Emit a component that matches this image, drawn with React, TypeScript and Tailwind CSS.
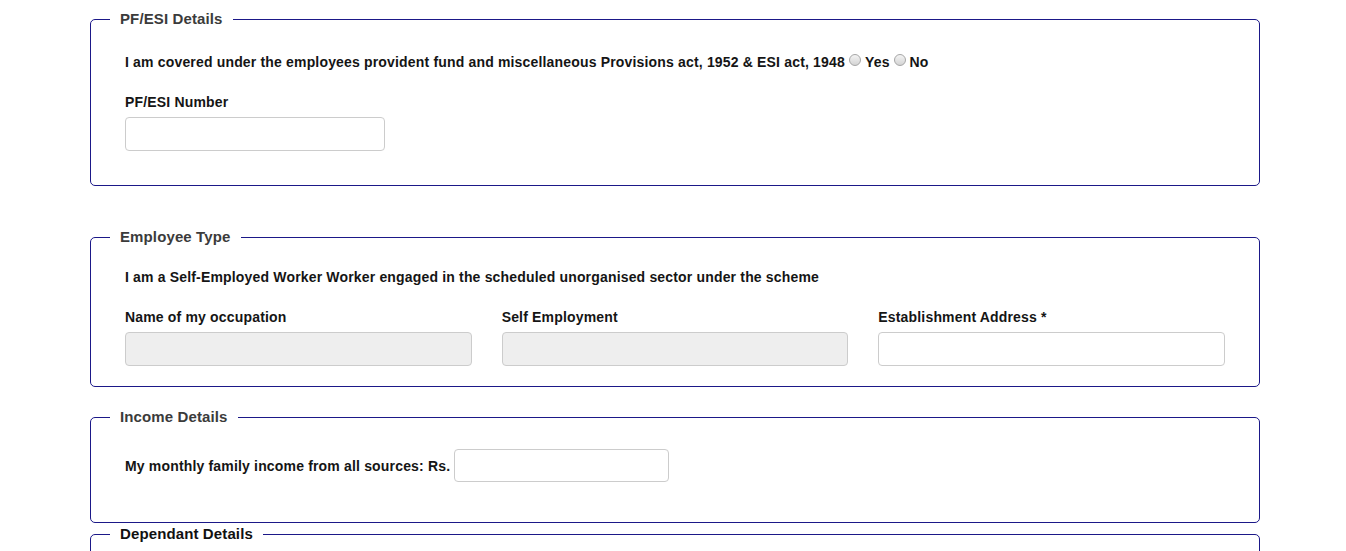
import React from "react";

const Radio: React.FC = () => (
    <span className="inline-block w-[12px] h-[12px] rounded-full border border-[#a6a6a6] bg-gradient-to-b from-[#f4f4f4] to-[#d4d4d4] align-[1px] mx-[4px]" />
);

const Section: React.FC<{ title: string; dark?: boolean; className?: string; children?: React.ReactNode }> = ({
    title,
    dark,
    className,
    children,
}) => (
    <fieldset className={`border border-[#1b1888] rounded-[5px] px-[19px] ${className ?? ""}`}>
        <legend
            className={`px-[10px] text-[15px] leading-[18px] font-bold tracking-[0.12px] ${dark ? "text-[#111]" : "text-[#3b3b3b]"}`}
        >
            {title}
        </legend>
        <div className="px-[15px]">{children}</div>
    </fieldset>
);

const App: React.FC = () => {
    return (
        <div className="bg-white w-[1346px] h-[551px] overflow-hidden font-['Liberation_Sans',Arial,sans-serif] text-[14px] font-bold text-[#151515] tracking-[0.17px]">
            <div className="ml-[90px] w-[1170px] pt-[10px]">
                {/* PF/ESI */}
                <Section title="PF/ESI Details" className="pb-[34px]">
                    <p className="pt-[24px] leading-5">
                        I am covered under the employees provident fund and miscellaneous Provisions act, 1952 &amp; ESI act, 1948
                        <Radio />Yes
                        <Radio />No
                    </p>
                    <label className="block mt-[20px] leading-5">PF/ESI Number</label>
                    <input className="block mt-[5px] w-[260px] h-[34px] border border-[#cccccc] rounded-[4px] bg-white" />
                </Section>

                {/* Employee type */}
                <Section title="Employee Type" className="mt-[42px] pb-[20px]">
                    <p className="pt-[21px] leading-5">
                        I am a Self-Employed Worker Worker engaged in the scheduled unorganised sector under the scheme
                    </p>
                    <div className="grid grid-cols-3 gap-[30px] mt-[20px]">
                        <div>
                            <label className="block leading-5">Name of my occupation</label>
                            <input disabled className="block mt-[5px] w-full h-[34px] border border-[#cccccc] rounded-[4px] bg-[#eeeeee]" />
                        </div>
                        <div>
                            <label className="block leading-5">Self Employment</label>
                            <input disabled className="block mt-[5px] w-full h-[34px] border border-[#cccccc] rounded-[4px] bg-[#eeeeee]" />
                        </div>
                        <div>
                            <label className="block leading-5">Establishment Address *</label>
                            <input className="block mt-[5px] w-full h-[34px] border border-[#cccccc] rounded-[4px] bg-white" />
                        </div>
                    </div>
                </Section>

                {/* Income */}
                <Section title="Income Details" className="mt-[21px] pb-[40px]">
                    <div className="flex items-center pt-[23px]">
                        <span className="leading-5">My monthly family income from all sources: Rs.</span>
                        <input className="ml-[4px] w-[215px] h-[33px] border border-[#cccccc] rounded-[4px] bg-white" />
                    </div>
                </Section>

                {/* Dependants */}
                <Section title="Dependant Details" dark className="mt-[2px] pb-[40px]">
                    <div className="h-[60px]" />
                </Section>
            </div>
        </div>
    );
};

export default App;
